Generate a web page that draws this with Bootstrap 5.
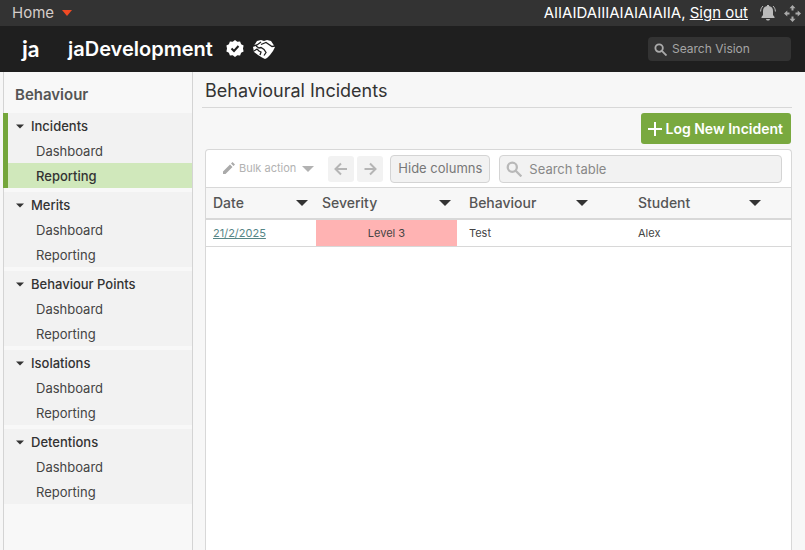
<!DOCTYPE html>
<html lang="en">
<head>
<meta charset="utf-8">
<meta name="viewport" content="width=device-width, initial-scale=1">
<title>Behavioural Incidents</title>
<link rel="stylesheet" href="https://cdn.jsdelivr.net/npm/bootstrap@5.3.0/dist/css/bootstrap.min.css">
<style>
body{font-family:Inter,"Liberation Sans",sans-serif;font-size:13px;line-height:20px;background:#f7f7f7;color:#333}
svg{display:block;flex:none}
.topbar{background:#333;height:26px;font-size:15px;color:#fff}
.home-btn{color:#d5cdca;font-size:15px;line-height:24px}
.icon-btn{color:#bbb}
.brandbar{background:#1f1f1f;height:46px;color:#fff;padding:0 14px 0 22px}
.site-name{font-size:20px;font-weight:600;line-height:26px}
.logo-text{font-family:Lato,sans-serif;font-size:23px;font-weight:700;line-height:26px;width:46px;padding-bottom:3px}
.vision-search{background:#333;border-radius:4px;width:143px;height:24px;padding:0 6px}
.vision-search input,.table-search input{background:none;border:0;outline:0;min-width:0;color:#777}
.vision-search input{font-size:12px;padding-left:5px}
.vision-search input::placeholder{color:#a5a5a5;opacity:1}
.side{width:190px;margin-left:3px;border:solid #d4d4d4;border-width:0 1px;background:#f8f8f8}
.side-title{font-size:15px;font-weight:600;color:#555;line-height:20px;padding:13px 11px 8px}
.group{background:#f2f2f2;margin-bottom:4px}
.group-btn{font-size:13px;font-weight:500;line-height:20px;padding:3px 0 2px 12px;color:#333;border:0;border-radius:0}
.group-btn svg{margin-right:7px}
.group a{display:block;color:#444;text-decoration:none;line-height:20px;padding:3px 0 2px 32px}
.group.current{border-left:5px solid #74a63b;margin-left:-1px}
.group.current .group-btn{padding-left:8px}
.group.current a{padding-left:28px}
.group.current a.active{background:#d0e8bb;color:#333;font-weight:500}
.content{padding:0 13px 0 9px;min-width:0}
.page-title{font-size:18px;font-weight:400;line-height:24px;padding:7px 3px 4px;border-bottom:1px solid #d8d8d8}
.log-btn{background:#79a93f;color:#fff;font-size:14px;font-weight:600;border:0;border-radius:3px;height:31px;padding:0 8px 0 7px;margin:5px 1px 5px 0}
.log-btn:hover{background:#6b9837;color:#fff}
.panel{border:1px solid #d8d8d8;border-bottom:0;border-radius:4px 4px 0 0;background:#fff;margin-left:3px}
.tools{height:37px;padding:0 9px 0 16px}
.bulk{font-size:11px;color:#b2b2b2;margin-right:14px}
.bulk svg:last-child{margin-left:2px}
.step-btn{width:26px;height:26px;background:#f2f2f2;border-radius:3px;margin-right:3px}
.hide-btn,.table-search{height:28px;border:1px solid #d4d4d4;border-radius:4px;background:#f2f2f2;color:#777}
.hide-btn{width:100px;font-size:13px;margin:0 9px 0 4px}
.table-search{padding-left:6px}
.table-search input{font-size:13px;padding-left:7px}
.table-search input::placeholder{color:#888;opacity:1}
.incidents{table-layout:fixed;width:100%;border-collapse:separate;border-spacing:0}
.incidents th{background:#f7f7f7;border-top:1px solid #d8d8d8;border-bottom:2px solid #d8d8d8;font-size:14px;font-weight:500;color:#555;height:33px;padding:0 8px 0 7px}
.incidents th svg{color:#333}
.incidents td{font-size:11px;color:#444;height:27px;border-bottom:1px solid #d8d8d8;padding:0 7px}
.incidents th:nth-child(2){padding:0 6px}
.incidents th:nth-child(n+3),.incidents td:nth-child(n+3){padding-left:12px}
.incidents th:nth-child(3){padding-right:38px}
.incidents th:nth-child(4){padding-right:30px}
.incidents td.level{background:#ffb3b3}
.incidents a{color:#568687}
.c-date{width:18.8%}.c-level{width:24.1%}.c-behaviour{width:28.9%}
</style>
</head>
<body class="min-vh-100 d-flex flex-column">
<svg width="0" height="0" class="position-absolute" aria-hidden="true"><defs>
<symbol id="caret" viewBox="0 0 12 6"><path d="M0 0h12L6 6z" fill="currentColor"/></symbol>
<symbol id="lens" viewBox="0 0 14 14"><g fill="none" stroke="currentColor" stroke-width="2"><circle cx="5.500" cy="5.500" r="4"/><path d="M8.500 8.500l5 5"/></g></symbol>
<symbol id="arrow" viewBox="0 0 14 14"><path d="M1.500 7H13M7 1.500L12.500 7 7 12.500" fill="none" stroke="currentColor" stroke-width="2"/></symbol>
</defs></svg>
<header>
<div class="topbar d-flex align-items-center justify-content-between ps-2 pe-1">
<button type="button" class="home-btn btn border-0 p-0 ps-1 d-flex align-items-center gap-2">Home <svg width="10" height="6"><path d="M0 0h10L5 6z" fill="#f04a24"/></svg></button>
<div class="d-flex align-items-center"><span>AIIAIDAIIIAIAIAIAIIA,&nbsp;</span><a href="#" class="text-white">Sign out</a>
<button type="button" class="icon-btn btn border-0 p-0 ms-2" aria-label="Notifications"><svg class="ms-1" width="16" height="18" viewBox="0 0 16 18" fill="#bbb"><path d="M7 1h2v1c3 .6 4 2.400 4 5v4l1.500 2v1h-13v-1L3 11V7c0-2.600 1-4.400 4-5zM6 15h4c-.3 2-3.700 2-4 0z"/><path d="M3 2C1.500 3.500.7 5 .6 7.500M13 2c1.500 1.500 2.300 3 2.400 5.500" fill="none" stroke="#bbb"/></svg></button>
<button type="button" class="icon-btn btn border-0 p-0 ms-2" aria-label="Move"><svg width="17" height="17" viewBox="0 0 17 17" fill="#aaa"><path id="ar" d="M8.500 0l3 3.300H9.500V5.500h-2V3.300h-2z"/><use href="#ar" transform="rotate(90 8.500 8.500)"/><use href="#ar" transform="rotate(180 8.500 8.500)"/><use href="#ar" transform="rotate(270 8.500 8.500)"/></svg></button></div>
</div>
<div class="brandbar d-flex align-items-center">
<span class="logo-text">ja</span><span class="site-name">jaDevelopment</span>
<svg class="ms-2 me-2" width="24" height="20" viewBox="-4 0 24 20"><path d="M10 1l2.300 1.700 2.800-.2 1 2.700 2.500 1.400-.6 2.900.6 2.900-2.500 1.400-1 2.700-2.800-.2L10 18l-2.300-1.700-2.800.2-1-2.700-2.500-1.400.6-2.900-.6-2.900 2.500-1.400 1-2.700 2.800.2z" fill="#fff"/><path d="M6.500 9.500l2.500 2.500 4.500-5" fill="none" stroke="#1f1f1f" stroke-width="2"/></svg>
<svg width="22" height="20" viewBox="0 0 22 20"><path d="M4 2l4-1 3 1 3-1 4 1 4 6-2 4-3 4-3 3-2 1-3-1.500-4-2.500-4-3L0 8z" fill="#fff"/><path d="M0 7l4-1 4-3M3 7l3 2 2-.5 3 2 2 3-2 3M8 5.500l5-2 6 4 3-.5M1 12l3-2 2 2 2 1-1 3" fill="none" stroke="#1f1f1f" stroke-width="1.300"/></svg>
<label class="vision-search d-flex align-items-center ms-auto"><svg width="13" height="13" color="#aaa"><use href="#lens"/></svg><input class="w-100" placeholder="Search Vision" aria-label="Search Vision"></label>
</div>
</header>
<div class="d-flex flex-grow-1">
<nav class="side flex-shrink-0" aria-label="Behaviour">
<h2 class="side-title m-0">Behaviour</h2>
<div class="group current"><button type="button" class="group-btn btn d-flex align-items-center w-100"><svg width="8" height="5"><use href="#caret"/></svg>Incidents</button><a href="#">Dashboard</a><a href="#" class="active" aria-current="page">Reporting</a></div>
<div class="group"><button type="button" class="group-btn btn d-flex align-items-center w-100"><svg width="8" height="5"><use href="#caret"/></svg>Merits</button><a href="#">Dashboard</a><a href="#">Reporting</a></div>
<div class="group"><button type="button" class="group-btn btn d-flex align-items-center w-100"><svg width="8" height="5"><use href="#caret"/></svg>Behaviour Points</button><a href="#">Dashboard</a><a href="#">Reporting</a></div>
<div class="group"><button type="button" class="group-btn btn d-flex align-items-center w-100"><svg width="8" height="5"><use href="#caret"/></svg>Isolations</button><a href="#">Dashboard</a><a href="#">Reporting</a></div>
<div class="group"><button type="button" class="group-btn btn d-flex align-items-center w-100"><svg width="8" height="5"><use href="#caret"/></svg>Detentions</button><a href="#">Dashboard</a><a href="#">Reporting</a></div>
</nav>
<main class="content flex-grow-1 d-flex flex-column">
<h1 class="page-title m-0">Behavioural Incidents</h1>
<button type="button" class="log-btn btn align-self-end d-flex align-items-center gap-1"><svg width="14" height="14"><path d="M7 0v14M0 7h14" stroke="#fff" stroke-width="2"/></svg>Log New Incident</button>
<section class="panel flex-grow-1">
<div class="tools d-flex align-items-center">
<button type="button" class="bulk btn border-0 p-0 d-flex align-items-center gap-1"><svg width="13" height="13" viewBox="0 0 13 13" fill="#aaa"><path d="M1 9.500L8 2.500 10.500 5l-7 7H1zM9 1.500L10.500 0 13 2.500 11.500 4z"/></svg>Bulk action<svg width="12" height="6"><use href="#caret"/></svg></button>
<button type="button" class="step-btn btn border-0 p-0 d-flex align-items-center justify-content-center" aria-label="Previous"><svg width="14" height="14" viewBox="0 0 14 14" fill="none" stroke="#b5b5b5" stroke-width="2"><path d="M13 7H1.500M7 1.500L1.500 7 7 12.500"/></svg></button>
<button type="button" class="step-btn btn border-0 p-0 d-flex align-items-center justify-content-center" aria-label="Next"><svg width="14" height="14" color="#b5b5b5"><use href="#arrow"/></svg></button>
<button type="button" class="hide-btn btn p-0 flex-shrink-0">Hide columns</button>
<label class="table-search d-flex align-items-center flex-grow-1"><svg width="16" height="16" color="#b8b8b8"><use href="#lens"/></svg><input class="w-100" placeholder="Search table" aria-label="Search table"></label>
</div>
<table class="incidents">
<colgroup><col class="c-date"><col class="c-level"><col class="c-behaviour"><col></colgroup>
<thead><tr>
<th scope="col"><div class="d-flex align-items-center justify-content-between">Date<svg width="12" height="6"><use href="#caret"/></svg></div></th>
<th scope="col"><div class="d-flex align-items-center justify-content-between">Severity<svg width="12" height="6"><use href="#caret"/></svg></div></th>
<th scope="col"><div class="d-flex align-items-center justify-content-between">Behaviour<svg width="12" height="6"><use href="#caret"/></svg></div></th>
<th scope="col"><div class="d-flex align-items-center justify-content-between">Student<svg width="12" height="6"><use href="#caret"/></svg></div></th>
</tr></thead>
<tbody><tr><td><a href="#">21/2/2025</a></td><td class="level text-center">Level 3</td><td>Test</td><td>Alex</td></tr></tbody>
</table>
</section>
</main>
</div>
<script src="https://cdn.jsdelivr.net/npm/bootstrap@5.3.0/dist/js/bootstrap.bundle.min.js"></script>
</body>
</html>
